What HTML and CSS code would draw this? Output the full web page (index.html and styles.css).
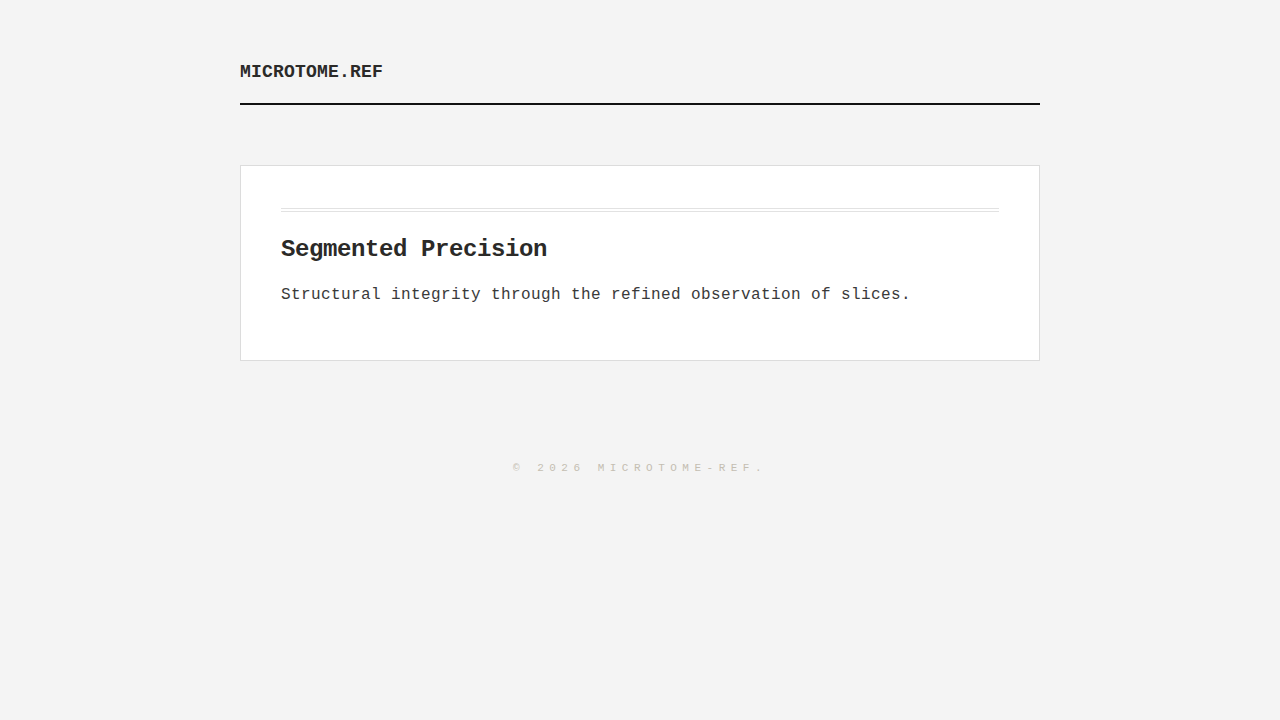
FILE: index.html
```html
<!DOCTYPE html>
<html lang="en">
<head>
<meta charset="utf-8">
<title>Microtome.ref</title>
<link rel="stylesheet" href="styles.css">
</head>
<body>
<div class="page">
  <header class="site-header">
    <div class="logo">MICROTOME.REF</div>
  </header>
  <main class="content">
    <section class="card">
      <div class="rule"></div>
      <h1 class="card-title">Segmented Precision</h1>
      <p class="card-text">Structural integrity through the refined observation of slices.</p>
    </section>
  </main>
  <footer class="site-footer">© 2026 MICROTOME-REF.</footer>
</div>
</body>
</html>
```
FILE: styles.css
```css
html, body {
  margin: 0;
  padding: 0;
  background: #f4f4f4;
}
body {
  font-family: "Liberation Mono", "DejaVu Sans Mono", monospace;
  color: #2b2a28;
}
.page {
  width: 800px;
  margin: 0 auto;
}
.site-header {
  padding: 61px 0 20px;
  border-bottom: 2px solid #111;
}
.logo {
  font-size: 18px;
  line-height: 22px;
  font-weight: 700;
  letter-spacing: 0.2px;
  color: #2b2a28;
}
.content {
  margin-top: 60px;
}
.card {
  background: #fff;
  border: 1px solid #dcdcdc;
  padding: 42px 40px 52px;
}
.rule {
  border-top: 4px double #e2e2e2;
}
.card-title {
  margin: 22px 0 0;
  font-size: 24px;
  line-height: 31px;
  font-weight: 700;
  letter-spacing: -0.4px;
  color: #2b2a28;
}
.card-text {
  margin: 17px 0 0;
  font-size: 16px;
  line-height: 26px;
  letter-spacing: 0.4px;
  color: #3a3a3a;
}
.site-footer {
  margin-top: 99px;
  text-align: center;
  font-size: 11px;
  line-height: 16px;
  letter-spacing: 5.5px;
  color: #c4beb2;
}
```
